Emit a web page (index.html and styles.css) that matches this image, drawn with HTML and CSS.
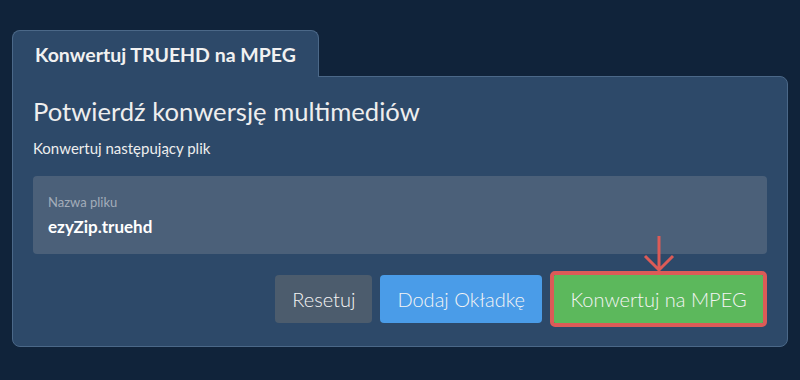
FILE: index.html
```html
<!DOCTYPE html>
<html lang="pl">
<head>
  <meta charset="UTF-8">
  <title>Konwertuj TRUEHD na MPEG</title>
  <meta name="viewport" content="width=device-width, initial-scale=1">
  <link rel="stylesheet" href="styles.css">
</head>
<body>
  <div class="wrap">
    <div class="tab">Konwertuj TRUEHD na MPEG</div>
    <div class="panel">
      <h1 class="title">Potwierdź konwersję multimediów</h1>
      <p class="subtitle">Konwertuj następujący plik</p>

      <div class="file-box">
        <div class="file-label">Nazwa pliku</div>
        <div class="file-name">ezyZip.truehd</div>
      </div>

      <div class="actions">
        <button class="btn btn-reset">Resetuj</button>
        <button class="btn btn-cover">Dodaj Okładkę</button>
        <div class="convert-wrap">
          <!-- arrow pointing at the main action -->
          <svg class="arrow" width="32" height="38" viewBox="0 0 32 38">
            <path d="M16 1 V35 M2 21 L16 35 L30 21" fill="none" stroke="#dc5b57" stroke-width="3"/>
          </svg>
          <button class="btn btn-convert">Konwertuj na MPEG</button>
        </div>
      </div>
    </div>
  </div>
</body>
</html>
```

FILE: styles.css
```css
* {
  margin: 0;
  padding: 0;
  box-sizing: border-box;
}

html, body {
  height: 100%;
  font-family: Lato, 'Noto Sans', sans-serif;
  background: #10233a;
  color: #f1f1f1;
}

.wrap {
  padding: 30px 12px 0 12px;
}

.tab {
  display: inline-flex;
  align-items: center;
  height: 47px;
  padding: 0 22px;
  background: #2d4969;
  border: 1px solid #4b6888;
  border-bottom: none;
  border-radius: 8px 8px 0 0;
  font-size: 19.5px;
  font-weight: bold;
  position: relative;
  z-index: 2;
  margin-bottom: -1px;
}

.panel {
  background: #2d4969;
  border: 1px solid #4b6888;
  border-radius: 0 8px 8px 8px;
  padding: 19px 20px 19px 20px;
}

.title {
  font-size: 25.6px;
  font-weight: normal;
  line-height: 1.2;
  color: #eeeeee;
}

.subtitle {
  font-size: 15px;
  line-height: 1.2;
  margin-top: 12px;
  color: #eeeeee;
}

.file-box {
  margin-top: 19px;
  background: #4b6079;
  border-radius: 4px;
  padding: 18px 15px 17px 15px;
}

.file-label {
  font-size: 13px;
  line-height: 16px;
  color: #a3adba;
}

.file-name {
  margin-top: 7px;
  font-size: 17px;
  font-weight: bold;
  line-height: 1.2;
  color: #ffffff;
}

.actions {
  margin-top: 17px;
  display: flex;
  justify-content: flex-end;
  align-items: center;
  gap: 8px;
}

.btn {
  font-family: Lato, 'Noto Sans', sans-serif;
  font-size: 20px;
  font-weight: 300;
  color: #f4f4f4;
  border: none;
  border-radius: 4px;
  height: 48px;
  padding: 0 17px;
  white-space: nowrap;
  cursor: pointer;
}

.btn-reset {
  background: #4c5c6d;
}

.btn-cover {
  background: #4a9ce8;
}

.convert-wrap {
  position: relative;
  border: 4px solid #dc5b57;
  border-radius: 5px;
}

.btn-convert {
  display: block;
  background: #5cb85c;
  border-radius: 1px;
  width: 209px;
  padding: 0;
}

.arrow {
  position: absolute;
  left: 50%;
  bottom: 100%;
  margin-bottom: 2px;
  transform: translateX(-50%);
}
```
